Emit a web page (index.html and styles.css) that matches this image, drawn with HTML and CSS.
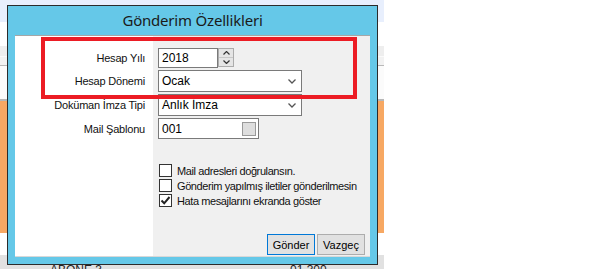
FILE: index.html
```html
<!DOCTYPE html>
<html>
  <head>
    <title>Gönderim Özellikleri</title>
    <link rel="stylesheet" href="styles.css">
  </head>

  <body>
    <div class="desk">
      <div class="band band-top"></div>
      <div class="band band-white"></div>
      <div class="band band-tabs"></div>
      <div class="band band-tabs2"></div>
      <div class="band band-head"></div>
      <div class="band band-orange"></div>
      <div class="band band-white2"></div>
      <div class="band band-row">
        <span class="cell-a">ABONE 3</span>
        <span class="cell-b">01.300</span>
      </div>

      <div class="window">
        <div class="titlebar">Gönderim Özellikleri</div>
        <div class="client">
          <div class="fields">
            <label>Hesap Yılı</label>
            <div class="spin">
              <span class="box box-spin">2018</span>
              <span class="arrows">
                <i><svg width="7" height="4" viewBox="0 0 7 4"><path d="M0.5 3.5 L3.5 0.5 L6.5 3.5" fill="none" stroke="#333" stroke-width="1.2"/></svg></i>
                <i><svg width="7" height="4" viewBox="0 0 7 4"><path d="M0.5 0.5 L3.5 3.5 L6.5 0.5" fill="none" stroke="#333" stroke-width="1.2"/></svg></i>
              </span>
            </div>

            <label>Hesap Dönemi</label>
            <div class="box combo">
              Ocak
              <svg width="8" height="5" viewBox="0 0 8 5"><path d="M0.5 0.5 L4 4 L7.5 0.5" fill="none" stroke="#555" stroke-width="1.3"/></svg>
            </div>

            <label>Doküman İmza Tipi</label>
            <div class="box combo">
              Anlık İmza
              <svg width="8" height="5" viewBox="0 0 8 5"><path d="M0.5 0.5 L4 4 L7.5 0.5" fill="none" stroke="#555" stroke-width="1.3"/></svg>
            </div>

            <label>Mail Şablonu</label>
            <div class="box text">
              001
              <span class="pick"></span>
            </div>
          </div>

          <div class="checks">
            <div class="check"><span class="tick"></span>Mail adresleri doğrulansın.</div>
            <div class="check"><span class="tick"></span>Gönderim yapılmış iletiler gönderilmesin</div>
            <div class="check"><span class="tick"><svg width="11" height="11" viewBox="0 0 11 11"><path d="M1.5 5.5 L4.2 8.3 L9.5 2" fill="none" stroke="#222" stroke-width="2"/></svg></span>Hata mesajlarını ekranda göster</div>
          </div>

          <div class="actions">
            <button class="btn btn-default">Gönder</button>
            <button class="btn">Vazgeç</button>
          </div>
        </div>
        <div class="highlight"></div>
      </div>
    </div>
  </body>
</html>
```

FILE: styles.css
```css
body {
  margin: 0;
  background: #fff;
  font-family: "Liberation Sans", Arial, sans-serif;
  font-size: 11px;
  color: #000;
}
.desk {
  position: relative;
  width: 384px;
  height: 269px;
  overflow: hidden;
  display: flex;
  flex-direction: column;
}
.band {
  flex: none;
}
.band-top {
  height: 22px;
  background: #e8effd;
}
.band-white {
  height: 24px;
  background: #fff;
}
.band-tabs {
  height: 10px;
  background: #eeeeee;
  border-bottom: 1px solid #fafafa;
}
.band-tabs2 {
  height: 8px;
  background: #f2f2f2;
  border-bottom: 1px solid #b9b9b9;
}
.band-head {
  height: 33px;
  background: #fbfbfb;
  border-bottom: 2px solid #b7b7b7;
}
.band-orange {
  height: 132px;
  background: #f7a863;
}
.band-white2 {
  height: 22px;
  background: #fff;
}
.band-row {
  height: 20px;
  background: #e1e1e1;
  position: relative;
  font-size: 12px;
  color: #222;
}
.cell-a {
  position: absolute;
  left: 50px;
  top: 8px;
}
.cell-b {
  position: absolute;
  left: 290px;
  top: 8px;
}

/* dialog */
.window {
  position: absolute;
  left: 7px;
  top: 5px;
  width: 371px;
  height: 260px;
  box-sizing: border-box;
  border: 1px solid #2b2b2b;
  background: #65c8e8;
  padding: 0 7px 7px;
}
.titlebar {
  height: 29px;
  line-height: 29px;
  text-align: center;
  font-family: "Noto Sans", "Open Sans", sans-serif;
  font-size: 15px;
  letter-spacing: -0.2px;
  color: #1a1a1a;
}
.client {
  height: 222px;
  box-sizing: border-box;
  border-top: 1px solid #a6a6a6;
  border-bottom: 1px solid #d8d8d8;
  background: linear-gradient(to right, #fff 138px, #f0f0f0 138px);
  display: flex;
  flex-direction: column;
}
.fields {
  display: grid;
  grid-template-columns: 138px 1fr;
  grid-template-rows: 20px 22px 22px 21px;
  row-gap: 2px;
  padding-top: 12px;
}
.fields label {
  text-align: right;
  padding-right: 8px;
  align-self: center;
  letter-spacing: -0.2px;
  color: #111;
}
.fields > div {
  margin-left: 5px;
}
.box {
  box-sizing: border-box;
  background: #fff;
  border: 1px solid #7a7a7a;
  padding-left: 3px;
  display: flex;
  align-items: center;
  font-size: 12px;
}
.spin {
  display: flex;
}
.box-spin {
  width: 60px;
  height: 20px;
}
.arrows {
  display: flex;
  flex-direction: column;
  width: 16px;
  height: 19px;
  box-sizing: border-box;
  border: 1px solid #acacac;
  background: #f0f0f0;
}
.arrows i {
  flex: 1;
  display: flex;
  align-items: center;
  justify-content: center;
  border-bottom: 1px solid #c8c8c8;
  background: #e5e5e5;
}
.arrows i:last-child {
  border-bottom: 0;
}
.combo {
  width: 144px;
  justify-content: space-between;
  padding-right: 5px;
}
.text {
  width: 101px;
  justify-content: space-between;
  padding-right: 2px;
}
.pick {
  width: 14px;
  height: 14px;
  box-sizing: border-box;
  background: #dedede;
  border: 1px solid #9a9a9a;
}
.checks {
  margin-top: 25px;
  padding-left: 144px;
  display: flex;
  flex-direction: column;
  gap: 2px;
  font-size: 11px;
  letter-spacing: -0.4px;
}
.check {
  display: flex;
  align-items: center;
  height: 13px;
  white-space: nowrap;
  color: #111;
}
.tick {
  flex: none;
  width: 13px;
  height: 13px;
  box-sizing: border-box;
  border: 1px solid #333;
  background: #fff;
  margin-right: 5px;
  display: flex;
  align-items: center;
  justify-content: center;
}
.actions {
  margin-top: auto;
  display: flex;
  justify-content: flex-end;
  gap: 2px;
  padding: 0 5px 1px 0;
}
.btn {
  width: 48px;
  height: 21px;
  box-sizing: border-box;
  background: #e1e1e1;
  border: 1px solid #adadad;
  font-family: "Liberation Sans", Arial, sans-serif;
  font-size: 11px;
  color: #000;
  padding: 0;
}
.btn-default {
  border: 1px solid #0078d7;
}
.highlight {
  position: absolute;
  left: 33px;
  top: 31px;
  width: 316px;
  height: 62px;
  box-sizing: border-box;
  border: 4px solid #ec1c24;
}
```
